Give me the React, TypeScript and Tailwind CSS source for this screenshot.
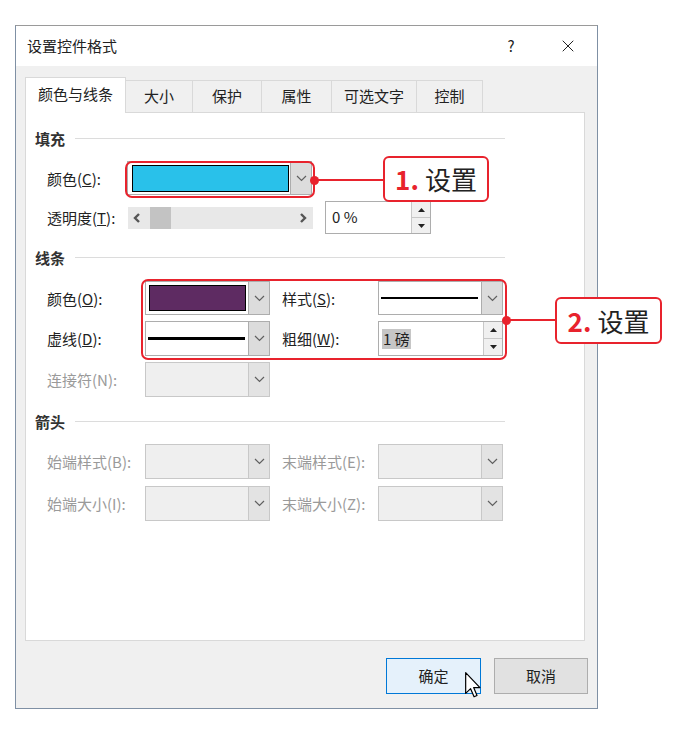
import { X } from 'lucide-react'
import type { ReactNode } from 'react'

const RED = '#e8232d'

function Chevron({ dir = 'down' }: { dir?: 'down' | 'left' | 'right' }) {
  if (dir === 'down') {
    return (
      <svg width="11" height="7" viewBox="0 0 11 7">
        <path d="M1 1 L5.5 5.5 L10 1" fill="none" stroke="#606060" strokeWidth="1.2" />
      </svg>
    )
  }
  return (
    <svg width="8" height="10" viewBox="0 0 8 10">
      <path
        d={dir === 'left' ? 'M6 1 L2 5 L6 9' : 'M2 1 L6 5 L2 9'}
        fill="none"
        stroke="#555"
        strokeWidth="2.4"
      />
    </svg>
  )
}

function Combo({
  width,
  disabled,
  children,
}: {
  width: string
  disabled?: boolean
  children?: ReactNode
}) {
  return (
    <div
      className={`${width} h-full flex border ${
        disabled ? 'border-[#c8c8c8] bg-[#efefef]' : 'border-[#adadad] bg-white'
      }`}
    >
      <div className="flex-1 relative flex items-center">{children}</div>
      <div
        className={`w-[21px] flex items-center justify-center border-l ${
          disabled ? 'border-[#c8c8c8] bg-[#e3e3e3]' : 'border-[#adadad] bg-[#dcdcdc]'
        }`}
      >
        <Chevron />
      </div>
    </div>
  )
}

function Spin({ width, children }: { width: string; children: ReactNode }) {
  return (
    <div className={`${width} h-full flex border border-[#adadad] bg-white`}>
      <div className="flex-1 flex items-center pl-[6px] text-[15px] text-[#222]">{children}</div>
      <div className="w-[19px] flex flex-col border-l border-[#c8c8c8]">
        <div className="flex-1 flex items-center justify-center bg-[#f0f0f0] border-b border-[#c8c8c8]">
          <svg width="7" height="4" viewBox="0 0 7 4">
            <path d="M0 4 L3.5 0 L7 4 Z" fill="#222" />
          </svg>
        </div>
        <div className="flex-1 flex items-center justify-center bg-[#f0f0f0]">
          <svg width="7" height="4" viewBox="0 0 7 4">
            <path d="M0 0 L3.5 4 L7 0 Z" fill="#222" />
          </svg>
        </div>
      </div>
    </div>
  )
}

function Header({ title }: { title: string }) {
  return (
    <div className="ml-[9px] w-[470px] h-[20px] flex items-center gap-[10px]">
      <span className="text-[15px] font-bold text-[#333] leading-none">{title}</span>
      <div className="flex-1 h-px bg-[#dcdcdc]" />
    </div>
  )
}

function Label({ text, width, disabled }: { text: ReactNode; width: string; disabled?: boolean }) {
  return (
    <div
      className={`${width} text-[15px] leading-none ${disabled ? 'text-[#9a9a9a]' : 'text-[#222]'}`}
    >
      {text}
    </div>
  )
}

const tabs = [
  { name: '大小', w: 'w-[67px]' },
  { name: '保护', w: 'w-[69px]' },
  { name: '属性', w: 'w-[70px]' },
  { name: '可选文字', w: 'w-[85px]' },
  { name: '控制', w: 'w-[66px]' },
]

export default function App() {
  return (
    <div
      className="relative w-[678px] h-[729px] bg-white overflow-hidden"
      style={{ fontFamily: '"Noto Sans CJK SC", "Noto Sans", sans-serif' }}
    >
      <div className="ml-[15px] mt-[25px] w-[583px] h-[684px] border border-[#7f90a4] border-t-[#9a9a9a] flex flex-col">
        {/* title bar */}
        <div className="h-[40px] bg-white flex items-center pl-[11px] shrink-0">
          <span className="text-[15px] text-[#222]">设置控件格式</span>
          <div className="ml-auto w-[46px] text-center text-[15px] text-[#222]">?</div>
          <div className="ml-[11px] mr-[6px] w-[46px] flex justify-center">
            <X size={20} strokeWidth={1.2} color="#222" />
          </div>
        </div>

        <div className="flex-1 bg-[#f0f0f0] px-[9px] pt-[11px]">
          {/* tabs */}
          <div className="h-[35px] flex items-end">
            <div className="relative z-10 -mb-px w-[101px] h-[36px] bg-white border border-b-0 border-[#d9d9d9] flex items-center justify-center text-[15px] text-[#222] pb-[2px]">
              颜色与线条
            </div>
            {tabs.map((t) => (
              <div
                key={t.name}
                className={`${t.w} h-[32px] border-t border-r border-[#d9d9d9] flex items-center justify-center text-[15px] text-[#222]`}
              >
                {t.name}
              </div>
            ))}
          </div>

          {/* panel */}
          <div className="w-[560px] h-[529px] bg-white border border-[#d9d9d9] flex flex-col">
            <div className="mt-[15px]">
              <Header title="填充" />
            </div>

            <div className="mt-[13px] ml-[21px] h-[34px] flex items-center">
              <Label width="w-[80px]" text={<>颜色(<u>C</u>):</>} />
              <Combo width="w-[185px]">
                <div className="absolute left-[4px] right-[1px] top-[3px] bottom-[2px] border border-black bg-[#29c1ea]" />
              </Combo>
            </div>

            <div className="mt-[6px] ml-[21px] h-[33px] flex items-center">
              <Label width="w-[81px]" text={<>透明度(<u>T</u>):</>} />
              <div className="w-[185px] h-[22px] bg-[#e8e8e8] flex items-center pl-[5px] pr-[6px]">
                <Chevron dir="left" />
                <div className="ml-[9px] w-[21px] h-full bg-[#c3c3c3]" />
                <div className="flex-1" />
                <Chevron dir="right" />
              </div>
              <div className="ml-[12px] h-full">
                <Spin width="w-[106px]">0 %</Spin>
              </div>
            </div>

            <div className="mt-[13px]">
              <Header title="线条" />
            </div>

            <div className="mt-[14px] ml-[21px] h-[34px] flex items-center">
              <Label width="w-[98px]" text={<>颜色(<u>O</u>):</>} />
              <Combo width="w-[125px]">
                <div className="absolute left-[3px] right-[2px] top-[3px] bottom-[3px] border border-black bg-[#5e2b62]" />
              </Combo>
              <div className="w-[12px]" />
              <Label width="w-[96px]" text={<>样式(<u>S</u>):</>} />
              <Combo width="w-[125px]">
                <div className="absolute left-[2px] right-[3px] top-[15px] h-[2px] bg-black" />
              </Combo>
            </div>

            <div className="mt-[6px] ml-[21px] h-[35px] flex items-center">
              <Label width="w-[98px]" text={<>虚线(<u>D</u>):</>} />
              <Combo width="w-[125px]">
                <div className="absolute left-[2px] right-[3px] top-[15px] h-[3px] bg-black" />
              </Combo>
              <div className="w-[12px]" />
              <Label width="w-[96px]" text={<>粗细(<u>W</u>):</>} />
              <Spin width="w-[125px]">
                <span className="bg-[#c6c6c6] px-px -ml-[3px] leading-[20px]">1 磅</span>
              </Spin>
            </div>

            <div className="mt-[6px] ml-[21px] h-[35px] flex items-center">
              <Label width="w-[98px]" disabled text="连接符(N):" />
              <Combo width="w-[125px]" disabled />
            </div>

            <div className="mt-[14px]">
              <Header title="箭头" />
            </div>

            <div className="mt-[13px] ml-[21px] h-[35px] flex items-center">
              <Label width="w-[98px]" disabled text="始端样式(B):" />
              <Combo width="w-[125px]" disabled />
              <div className="w-[12px]" />
              <Label width="w-[96px]" disabled text="末端样式(E):" />
              <Combo width="w-[125px]" disabled />
            </div>

            <div className="mt-[7px] ml-[21px] h-[35px] flex items-center">
              <Label width="w-[98px]" disabled text="始端大小(I):" />
              <Combo width="w-[125px]" disabled />
              <div className="w-[12px]" />
              <Label width="w-[96px]" disabled text="末端大小(Z):" />
              <Combo width="w-[125px]" disabled />
            </div>
          </div>

          {/* buttons */}
          <div className="mt-[17px] flex justify-end gap-[13px]">
            <div className="w-[95px] h-[36px] bg-[#e5f1fb] border border-[#0078d7] flex items-center justify-center text-[15px] text-[#222]">
              确定
            </div>
            <div className="w-[94px] h-[36px] bg-[#e1e1e1] border border-[#adadad] flex items-center justify-center text-[15px] text-[#222]">
              取消
            </div>
          </div>
        </div>
      </div>

      {/* mouse cursor */}
      <svg className="absolute left-[465px] top-[672px]" width="16" height="26" viewBox="0 0 12 19.5">
        <path
          d="M0.5 0.5 L0.5 16 L4.2 12.5 L6.8 18.6 L9 17.6 L6.5 11.7 L11.2 11.7 Z"
          fill="white"
          stroke="black"
          strokeWidth="0.9"
          strokeLinejoin="round"
        />
      </svg>

      {/* callout 1 */}
      <div
        className="absolute left-[125px] top-[161px] w-[190px] h-[37px] border-2 rounded-[7px]"
        style={{ borderColor: RED }}
      />
      <div className="absolute left-[310px] top-[176px] w-[9px] h-[9px] rounded-full bg-[#e8232d]" />
      <div className="absolute left-[314px] top-[179px] w-[70px] h-[2px] bg-[#e8232d]" />
      <div className="absolute left-[383px] top-[156px] w-[106px] h-[46px] bg-white border-2 border-[#e8232d] rounded-[6px] flex items-center justify-center gap-[6px]">
        <span className="text-[26px] font-bold text-[#e8232d] leading-none">1.</span>
        <span className="text-[26px] text-[#222] leading-none">设置</span>
      </div>

      {/* callout 2 */}
      <div className="absolute left-[141px] top-[279px] w-[366px] h-[81px] border-2 border-[#e8232d] rounded-[7px]" />
      <div className="absolute left-[502px] top-[316px] w-[9px] h-[9px] rounded-full bg-[#e8232d]" />
      <div className="absolute left-[507px] top-[319px] w-[48px] h-[2px] bg-[#e8232d]" />
      <div className="absolute left-[555px] top-[297px] w-[107px] h-[47px] bg-white border-2 border-[#e8232d] rounded-[6px] flex items-center justify-center gap-[6px]">
        <span className="text-[26px] font-bold text-[#e8232d] leading-none">2.</span>
        <span className="text-[26px] text-[#222] leading-none">设置</span>
      </div>
    </div>
  )
}
